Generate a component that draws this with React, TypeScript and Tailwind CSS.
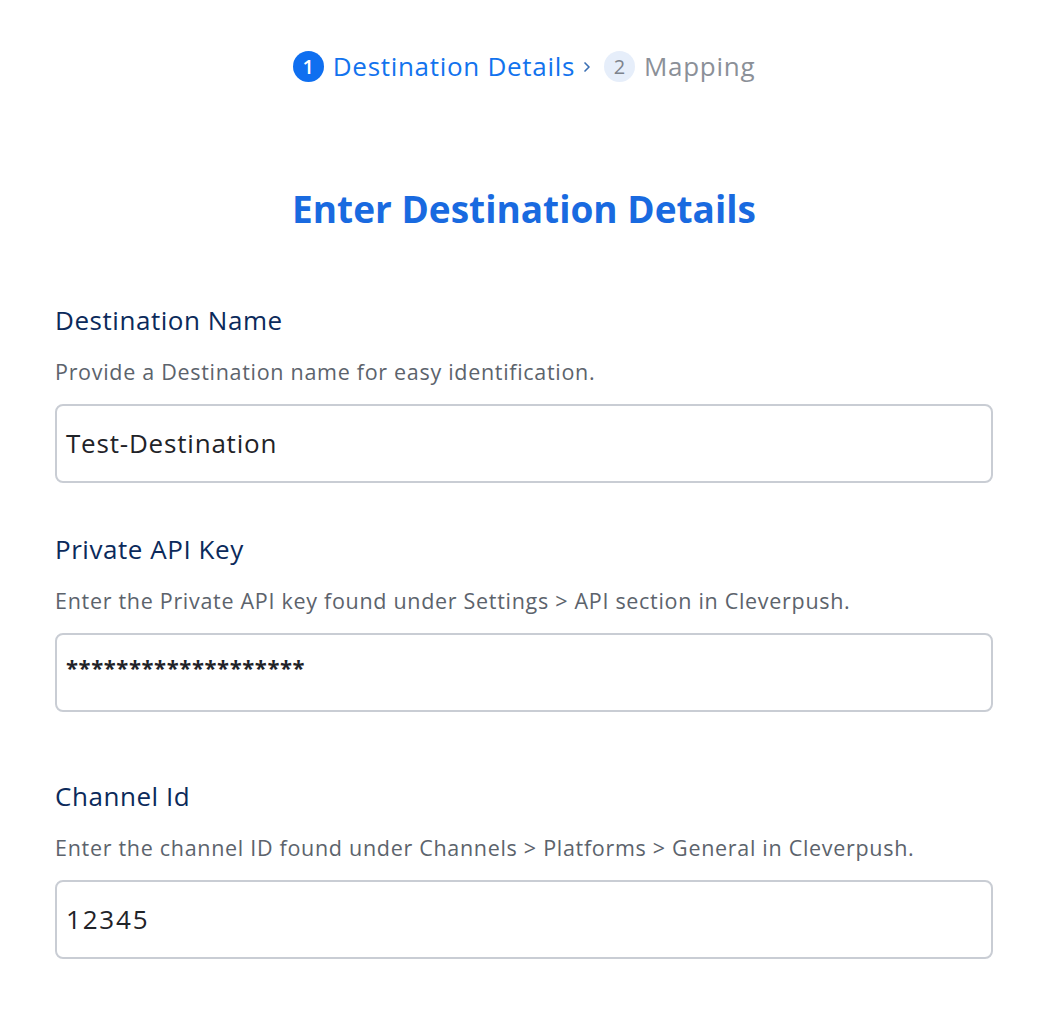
import { ChevronRight } from 'lucide-react';

const font = { fontFamily: '"Open Sans", "Noto Sans", sans-serif' };

function Field({ label, hint, value, mono, wide, gapTop }: { label: string; hint: string; value: string; mono?: boolean; wide?: boolean; gapTop: string }) {
  return (
    <div className={gapTop}>
      <div className="text-[26px] leading-[30px] tracking-[0.55px] text-[#0b2a5b]">{label}</div>
      <div className="mt-[24px] text-[21.5px] leading-[26px] tracking-[0.7px] text-[#5c636c]">{hint}</div>
      <div className="mt-[19px] flex h-[79px] rounded-lg border-2 border-[#c9cdd4] px-[9px]">
        {mono ? (
          <div className="pt-[16px] text-[22px] font-bold tracking-[0.6px] text-[#1f2328]">{value}</div>
        ) : (
          <div className={`flex items-center text-[26px] text-[#1f2328] ${wide ? 'tracking-[1.8px]' : 'tracking-[0.8px]'}`}>{value}</div>
        )}
      </div>
    </div>
  );
}

export default function App() {
  return (
    <div className="min-h-[1028px] w-full bg-white pr-[10px]" style={font}>
      <div className="flex h-[129px] items-start justify-center pt-[47px]">
        <div className="flex items-center">
          <div className="flex h-[31px] w-[31px] items-center justify-center rounded-full bg-[#0f6ff0] text-[20px] font-semibold text-white">1</div>
          <span className="ml-[9px] text-[26px] tracking-[0.7px] text-[#1273ee]">Destination Details</span>
          <ChevronRight size={16} strokeWidth={2.5} className="ml-[4px] mr-[9px] text-[#3b6fb3]" />
          <div className="flex h-[31px] w-[31px] items-center justify-center rounded-full bg-[#e6eefa] text-[20px] text-[#7d838c]">2</div>
          <span className="ml-[9px] text-[26px] tracking-[0.7px] text-[#8b9098]">Mapping</span>
        </div>
      </div>
      <h1 className="mt-[55px] text-center text-[37px] font-bold leading-[50px] text-[#196ae0]">Enter Destination Details</h1>
      <div className="px-[55px] pt-[71px]">
        <Field label="Destination Name" hint="Provide a Destination name for easy identification." value="Test-Destination" gapTop="" />
        <Field label="Private API Key" hint="Enter the Private API key found under Settings > API section in Cleverpush." value="*******************" mono gapTop="mt-[51px]" />
        <Field label="Channel Id" hint="Enter the channel ID found under Channels > Platforms > General in Cleverpush." value="12345" wide gapTop="mt-[69px]" />
      </div>
    </div>
  );
}
